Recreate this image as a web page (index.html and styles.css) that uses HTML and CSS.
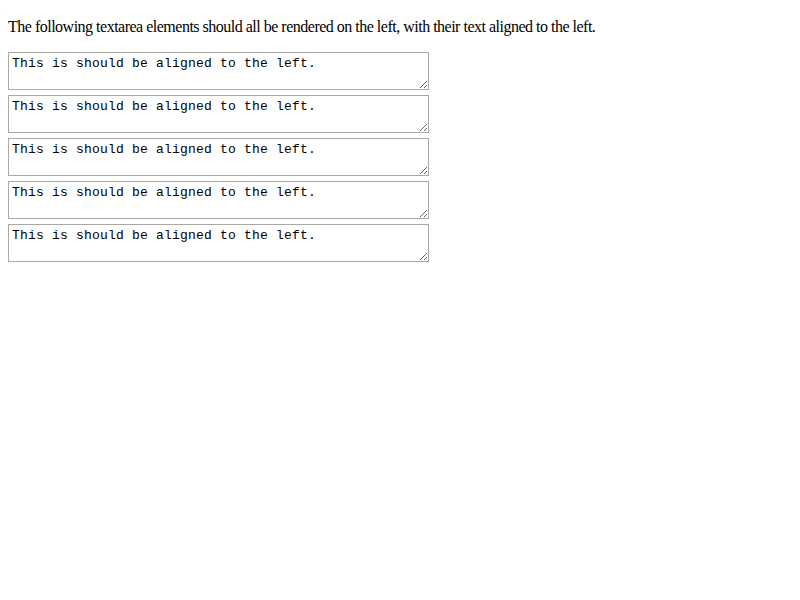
FILE: index.html
```html
<!DOCTYPE html>
<html>
<head>
<meta charset="utf-8">
<link rel="stylesheet" href="styles.css">
</head>
<body>
<p class="intro">The following textarea elements should all be rendered on the left, with their text aligned to the left.</p>
<div class="list">
<textarea class="box">This is should be aligned to the left.</textarea>
<textarea class="box">This is should be aligned to the left.</textarea>
<textarea class="box">This is should be aligned to the left.</textarea>
<textarea class="box">This is should be aligned to the left.</textarea>
<textarea class="box">This is should be aligned to the left.</textarea>
</div>
</body>
</html>
```
FILE: styles.css
```css
html, body {
  background: #ffffff;
}
body {
  margin: 8px;
  font-family: "Liberation Serif", "Times New Roman", serif;
  font-size: 16px;
  color: #000000;
}
.intro {
  margin: 10px 0 16px;
  line-height: 18px;
  letter-spacing: -0.5px;
}
.list {
  display: flex;
  flex-direction: column;
  align-items: flex-start;
  gap: 5px;
}
.box {
  box-sizing: border-box;
  width: 421px;
  height: 38px;
  margin: 0;
  padding: 3px 2px 2px 3px;
  border: 1px solid #a9a9a9;
  font-family: "Liberation Mono", "Courier New", monospace;
  font-size: 13px;
  letter-spacing: 0.2px;
  color: #000000;
  background: #ffffff;
  text-align: left;
}
```
